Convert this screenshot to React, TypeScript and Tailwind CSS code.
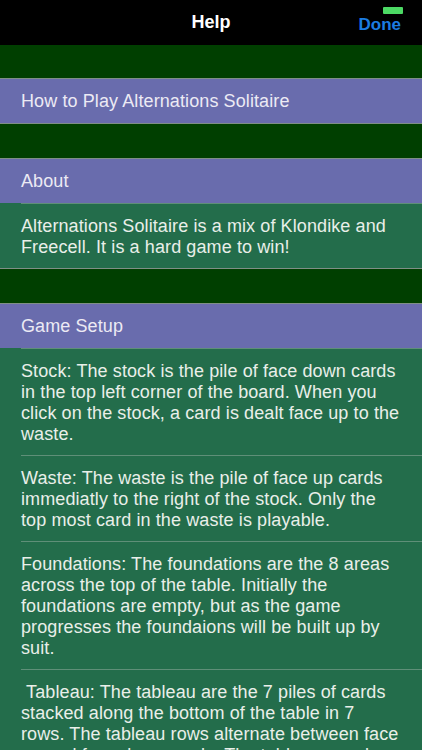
import React from "react";

const sections: { title: string; rows: string[] }[] = [
  { title: "How to Play Alternations Solitaire", rows: [] },
  {
    title: "About",
    rows: [
      "Alternations Solitaire is a mix of Klondike and Freecell. It is a hard game to win!",
    ],
  },
  {
    title: "Game Setup",
    rows: [
      "Stock: The stock is the pile of face down cards in the top left corner of the board. When you click on the stock, a card is dealt face up to the waste.",
      "Waste: The waste is the pile of face up cards immediatly to the right of the stock. Only the top most card in the waste is playable.",
      "Foundations: The foundations are the 8 areas across the top of the table. Initially the foundations are empty, but as the game progresses the foundaions will be built up by suit.",
      "\u00a0Tableau: The tableau are the 7 piles of cards stacked along the bottom of the table in 7 rows. The tableau rows alternate between face up and face down cards. The tableau may be built down by alternating colors.",
    ],
  },
];

const Section: React.FC<{ title: string; rows: string[] }> = ({ title, rows }) => {
  return (
    <div className="border-y border-[#7f8f86]">
      <div className="flex h-[44px] items-center bg-[#696cad] px-[21px] text-[18px] tracking-[0.1px] text-[#eceaf4]">
        {title}
      </div>
      {rows.map((row, i) => (
        <div key={i} className="bg-[#236d4b] pl-[21px]">
          <div className="border-t border-[#5f8f78] pt-[12px] pb-[10px] pr-[19px] text-[18px] leading-[21px] tracking-[0.1px] text-[#e9efe9]">
            {row}
          </div>
        </div>
      ))}
    </div>
  );
};

export default function App() {
  return (
    <div className="h-[750px] w-[422px] overflow-hidden bg-[#003f00] font-['Liberation_Sans',Arial,sans-serif]">
      <div className="relative flex h-[45px] items-center justify-center bg-black">
        <span className="text-[18px] font-semibold text-white">Help</span>
        <span className="absolute right-[21px] top-[12px] text-[17px] font-semibold text-[#1b7ce2]">Done</span>
        <span className="absolute right-[19px] top-[7px] h-[7px] w-[20px] rounded-[1px] bg-[#4cd964]" />
      </div>
      <div className="flex flex-col gap-[34px] pt-[33px]">
        {sections.map((s) => (
          <Section key={s.title} title={s.title} rows={s.rows} />
        ))}
      </div>
    </div>
  );
}
